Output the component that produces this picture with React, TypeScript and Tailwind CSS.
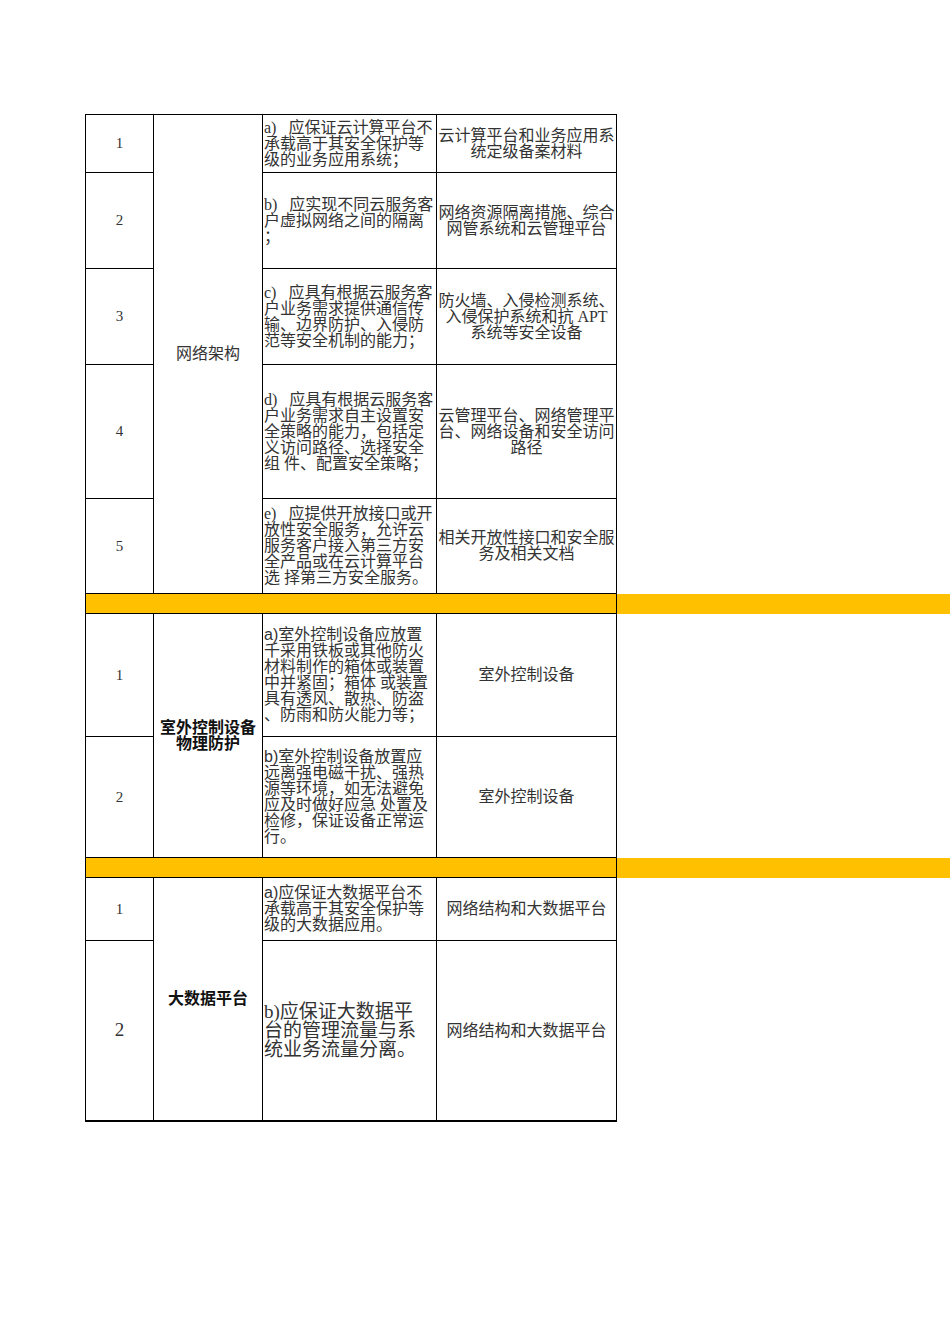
import { ReactNode } from 'react';

const serif = 'font-["Liberation_Serif","Noto_Sans_CJK_SC",serif]';
const sans = 'font-["Liberation_Sans","Noto_Sans_CJK_SC",sans-serif]';

function Lines({ lines, prefix }: { lines: string[]; prefix?: string }) {
  return (
    <>
      {lines.map((l, i) => (
        <span key={i} className="block whitespace-pre">
          {i === 0 && prefix && <span className={sans}>{prefix}</span>}
          {l}
        </span>
      ))}
    </>
  );
}

function NumCell({ n }: { n: number }) {
  return (
    <div
      className={`flex items-center justify-center border-r border-b border-black text-[15px] text-[#333] ${serif}`}
    >
      {n}
    </div>
  );
}

function ReqCell({ children }: { children: ReactNode }) {
  return (
    <div
      className={`flex items-center border-r border-b border-black pl-[1px] text-[16px] leading-4 text-[#333] ${serif}`}
    >
      <div>{children}</div>
    </div>
  );
}

function DocCell({ lines, className = '' }: { lines: string[]; className?: string }) {
  return (
    <div
      className={`flex items-center justify-center border-r border-b border-black text-center text-[16px] leading-4 text-[#333] ${className}`}
    >
      <div>
        <Lines lines={lines} />
      </div>
    </div>
  );
}

function Band() {
  return (
    <div className="flex h-[20px]">
      <div className="w-[532px] border-l border-r border-b border-black bg-[#ffc000]" />
      <div className="flex-1 bg-[#ffc000]" />
    </div>
  );
}

const cloudRows = [
  {
    req: ['a)\u2002 应保证云计算平台不', '承载高于其安全保护等', '级的业务应用系统；'],
    doc: ['云计算平台和业务应用系', '统定级备案材料'],
  },
  {
    req: ['b)\u2002 应实现不同云服务客', '户虚拟网络之间的隔离', '；'],
    doc: ['网络资源隔离措施、综合', '网管系统和云管理平台'],
  },
  {
    req: ['c)\u2002 应具有根据云服务客', '户业务需求提供通信传', '输、边界防护、入侵防', '范等安全机制的能力；'],
    doc: ['防火墙、入侵检测系统、', '入侵保护系统和抗 APT', '系统等安全设备'],
  },
  {
    req: [
      'd)\u2002 应具有根据云服务客',
      '户业务需求自主设置安',
      '全策略的能力，包括定',
      '义访问路径、选择安全',
      '组 件、配置安全策略；',
    ],
    doc: ['云管理平台、网络管理平', '台、网络设备和安全访问', '路径'],
  },
  {
    req: [
      'e)\u2002 应提供开放接口或开',
      '放性安全服务，允许云',
      '服务客户接入第三方安',
      '全产品或在云计算平台',
      '选 择第三方安全服务。',
    ],
    doc: ['相关开放性接口和安全服', '务及相关文档'],
  },
];

export default function App() {
  return (
    <div className="min-h-[1344px] bg-white pt-[114px] pl-[85px]">
      {/* 网络架构 */}
      <div className="grid w-[532px] grid-cols-[68px_109px_174px_180px] grid-rows-[58px_96px_96px_134px_95px] border-l border-t border-black">
        {cloudRows.map((row, i) => (
          <div key={i} className="contents">
            <NumCell n={i + 1} />
            {i === 0 && (
              <div
                className={`row-span-5 flex items-center justify-center border-r border-b border-black text-[16px] text-[#333] ${serif}`}
              >
                网络架构
              </div>
            )}
            <ReqCell>
              <Lines lines={row.req} />
            </ReqCell>
            <DocCell lines={row.doc} className={serif} />
          </div>
        ))}
      </div>

      <Band />

      {/* 室外控制设备物理防护 */}
      <div className="grid w-[532px] grid-cols-[68px_109px_174px_180px] grid-rows-[123px_121px] border-l border-black">
        <NumCell n={1} />
        <div
          className={`row-span-2 flex items-center justify-center border-r border-b border-black text-center text-[16px] font-bold leading-4 text-[#111] ${sans}`}
        >
          <div>
            室外控制设备
            <br />
            物理防护
          </div>
        </div>
        <ReqCell>
          <Lines
            prefix="a)"
            lines={[
              '室外控制设备应放置',
              '千采用铁板或其他防火',
              '材料制作的箱体或装置',
              '中并紧固；箱体 或装置',
              '具有透风、散热、防盗',
              '、防雨和防火能力等；',
            ]}
          />
        </ReqCell>
        <DocCell lines={['室外控制设备']} className={sans} />

        <NumCell n={2} />
        <ReqCell>
          <Lines
            prefix="b)"
            lines={[
              '室外控制设备放置应',
              '远离强电磁干扰、强热',
              '源等环境，如无法避免',
              '应及时做好应急 处置及',
              '检修，保证设备正常运',
              '行。',
            ]}
          />
        </ReqCell>
        <DocCell lines={['室外控制设备']} className={sans} />
      </div>

      <Band />

      {/* 大数据平台 */}
      <div className="grid w-[532px] grid-cols-[68px_109px_174px_180px] grid-rows-[63px_179px] border-l border-b-2 border-black">
        <NumCell n={1} />
        <div
          className={`row-span-2 flex items-center justify-center border-r border-black text-[16px] font-bold text-[#111] ${sans}`}
        >
          大数据平台
        </div>
        <ReqCell>
          <Lines prefix="a)" lines={['应保证大数据平台不', '承载高于其安全保护等', '级的大数据应用。']} />
        </ReqCell>
        <DocCell lines={['网络结构和大数据平台']} className={sans} />

        <div
          className={`flex items-center justify-center border-r border-black text-[19px] text-[#333] ${serif}`}
        >
          2
        </div>
        <div
          className={`flex items-center border-r border-black pl-[1px] text-[19px] leading-[19px] text-[#333] ${serif}`}
        >
          <div>
            <Lines lines={['b)应保证大数据平', '台的管理流量与系', '统业务流量分离。']} />
          </div>
        </div>
        <div
          className={`flex items-center justify-center border-r border-black text-[16px] text-[#333] ${sans}`}
        >
          网络结构和大数据平台
        </div>
      </div>
    </div>
  );
}
